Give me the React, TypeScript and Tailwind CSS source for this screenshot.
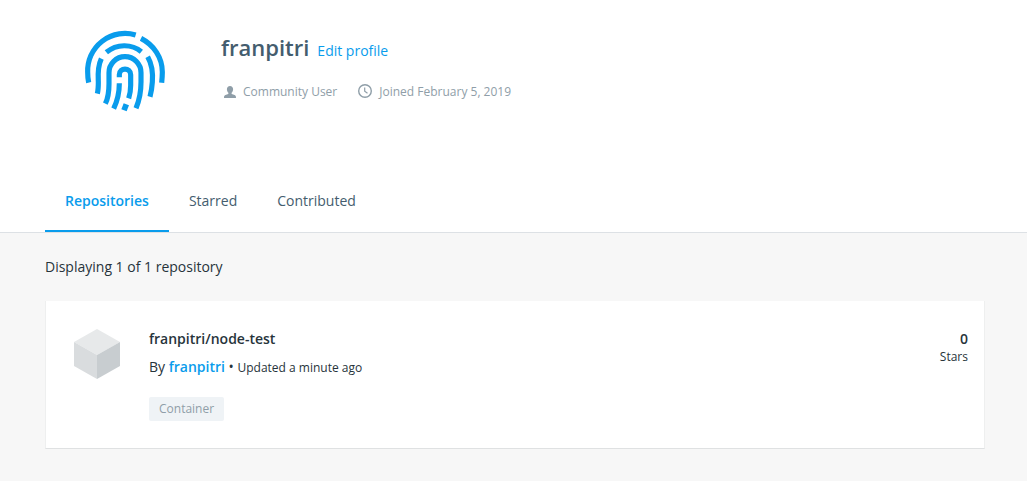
import React from "react";

function Fingerprint() {
  return (
    <svg
      viewBox="30 32 240 240"
      className="size-20 shrink-0 overflow-visible"
      fill="none"
      stroke="#099cec"
      strokeWidth="15.500"
      aria-hidden="true"
    >
      <path d="M41 187C39 178 38 167 38 155A112 112 0 0 1 182 44" />
      <path d="M198 54C237 74 262 112 262 155C262 167 261 177 260 187" />
      <path d="M94 96C125 70 170 70 199 94" />
      <path d="M79 115C67 140 69 165 70 185C70 197 70 208 67 220" />
      <path d="M218 109C233 135 234 160 232 185C231 200 229 215 225 229" />
      <path d="M91 250C101 230 102 210 102 190V157A48 48 0 0 1 198 157V185C198 215 193 240 183 264" />
      <path d="M133 171V163C133 141 167 141 167 163V195C167 210 165 222 161 234" />
      <path d="M133 189C133 220 128 240 116 265" />
      <path d="M154 252L147 270" strokeWidth="17" />
    </svg>
  );
}

function UserIcon() {
  return (
    <svg viewBox="0 0 12 12" className="h-3 w-3" fill="#8f9ea8" aria-hidden="true">
      <path d="M6 0C7.900 0 9.100 1.300 9.100 3.200C9.100 4.800 8.400 6 7.600 6.700C7.400 7.500 7.700 7.900 8.400 8.200L10.600 9C11.700 9.400 12 10.200 12 12H0C0 10.200 .3 9.400 1.400 9L3.600 8.200C4.300 7.900 4.600 7.500 4.400 6.700C3.600 6 2.900 4.800 2.900 3.200C2.900 1.300 4.100 0 6 0Z" />
    </svg>
  );
}

function ClockIcon() {
  return (
    <svg viewBox="0 0 14 14" className="mb-0.5 h-3.5 w-3.5" fill="none" stroke="#8f9ea8" aria-hidden="true">
      <circle cx="7" cy="7" r="6.300" strokeWidth="1.400" />
      <path d="M6.700 3.500V7.200L9.500 9.200" strokeWidth="1.200" />
    </svg>
  );
}

function Cube() {
  return (
    <svg viewBox="0 0 46 50" className="h-[50px] w-[46px]" aria-hidden="true">
      <path d="M23 0L46 13L23 26L0 13Z" fill="#e7e9ea" />
      <path d="M0 13L23 26V50L0 37Z" fill="#d9dcde" />
      <path d="M46 13L23 26V50L46 37Z" fill="#c8cdd0" />
    </svg>
  );
}

const tabs = ["Repositories", "Starred", "Contributed"];

export default function App() {
  return (
    <div className="min-h-screen bg-[#f7f7f7] font-['Open_Sans',sans-serif] text-sm text-[#27343b]">
      <header className="border-b border-[#dde1e5] bg-white px-[45px]">
        <div className="flex h-[170px] gap-14 pt-[31px] pl-10">
          <Fingerprint />
          <div>
            <div className="flex items-baseline gap-2">
              <h1 className="text-[22px] leading-8 font-semibold text-[#445d6e]">franpitri</h1>
              <a href="#edit" className="text-[#099cec]">Edit profile</a>
            </div>
            <ul className="mt-5 flex gap-[21px] pl-[3px] text-xs leading-[18px] text-[#8f9ea8]">
              <li className="flex items-center gap-[7px]">
                <UserIcon />
                Community User
              </li>
              <li className="flex items-center gap-[7px]">
                <ClockIcon />
                Joined February 5, 2019
              </li>
            </ul>
          </div>
        </div>
        <nav className="flex" aria-label="Profile">
          {tabs.map((tab, i) => (
            <a
              key={tab}
              href={`#${tab.toLowerCase()}`}
              aria-current={i === 0 ? "page" : undefined}
              className={
                i === 0
                  ? "h-[62px] border-b-2 border-[#099cec] px-5 leading-[62px] font-semibold text-[#099cec]"
                  : "h-[62px] px-5 leading-[62px] text-[#445d6e]"
              }
            >
              {tab}
            </a>
          ))}
        </nav>
      </header>
      <main className="px-[45px] pt-6 pb-8">
        <p className="leading-5">Displaying 1 of 1 repository</p>
        <article className="mt-6 mr-[-3px] flex border border-t-0 border-x-[#eeefef] border-b-[#dfe1e2] bg-white pt-7 pr-4 pb-[27px] pl-7">
          <Cube />
          <div className="ml-[29px] flex-1">
            <h2 className="leading-5 font-semibold">franpitri/node-test</h2>
            <p className="mt-2 leading-5">
              By <a href="#franpitri" className="font-semibold text-[#099cec]">franpitri</a> •{" "}
              <span className="text-xs">Updated a minute ago</span>
            </p>
            <div className="mt-5 flex">
              <span className="rounded-xs bg-[#eff3f6] px-2.5 text-xs leading-6 text-[#8f9ea8]">
                Container
              </span>
            </div>
          </div>
          <div className="text-right">
            <div className="leading-5 font-semibold">0</div>
            <div className="text-xs leading-4">Stars</div>
          </div>
        </article>
      </main>
    </div>
  );
}
